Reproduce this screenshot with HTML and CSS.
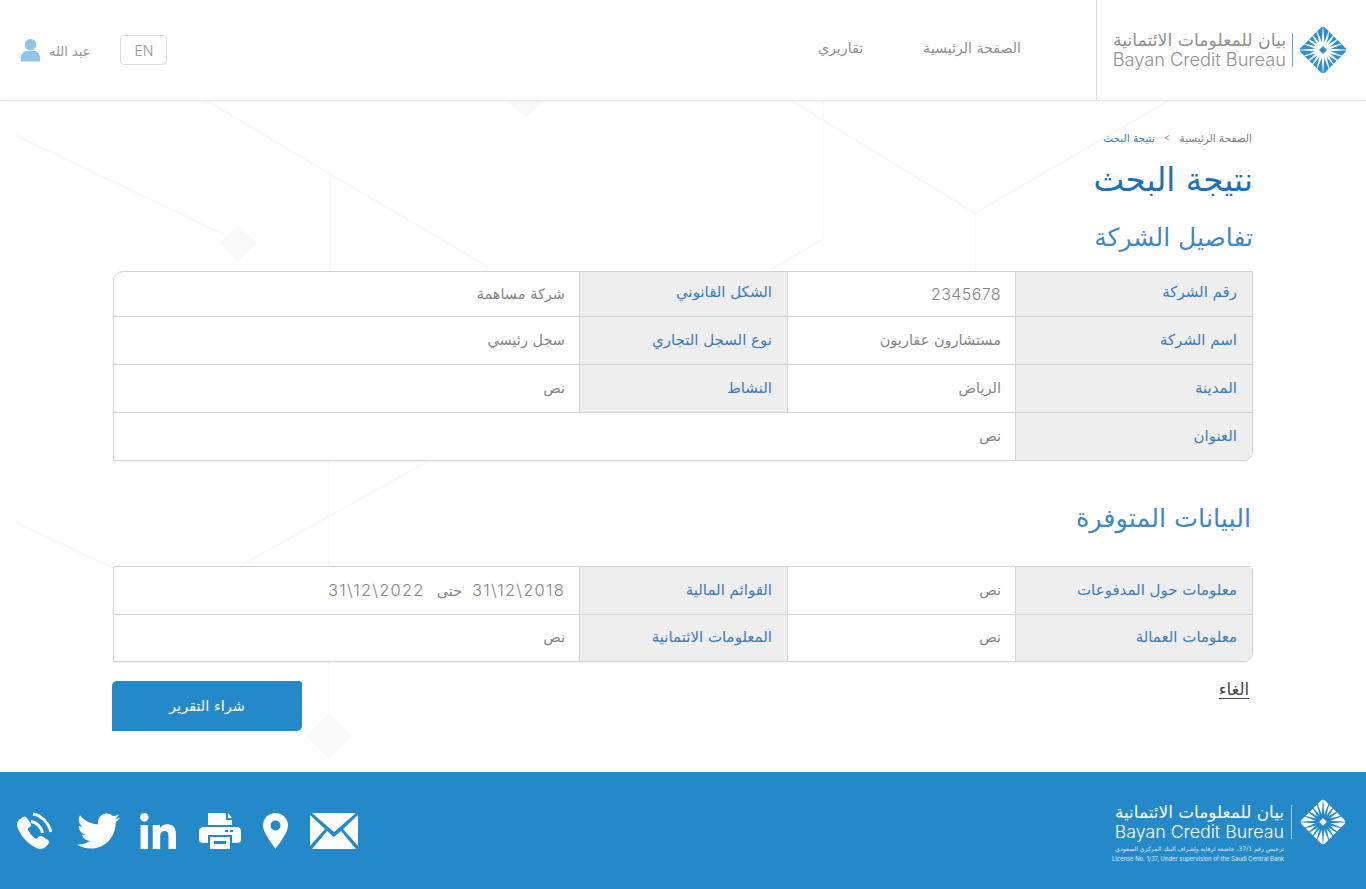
FILE: index.html
```html
<!DOCTYPE html>
<html lang="ar" dir="rtl">
<head>
  <meta charset="UTF-8" />
  <meta name="viewport" content="width=device-width, initial-scale=1.0" />
  <title>نتيجة البحث</title>
  <link rel="stylesheet" href="styles.css">
</head>
<body>

  <!-- Header -->
  <header class="site-header">
    <a class="brand" href="#">
      <svg class="brand-mark" viewBox="0 0 48 48"><use href="#mark" /></svg>
      <span class="brand-rule"></span>
      <span class="brand-text">
        <span class="brand-ar">بيان للمعلومات الائتمانية</span>
        <span class="brand-en">Bayan Credit Bureau</span>
      </span>
    </a>
    <nav class="main-nav">
      <a href="#">الصفحة الرئيسية</a>
      <a href="#">تقاريري</a>
    </nav>
    <div class="user-area">
      <svg class="user-icon" viewBox="0 0 22 24"><circle cx="11" cy="6.5" r="6" /><path d="M1 24v-4c0-4 3-7 6-7h8c3 0 6 3 6 7v4z" /></svg>
      <span class="user-name">عبد الله</span>
      <a class="lang-btn" href="#">EN</a>
    </div>
  </header>

  <!-- Background pattern -->
  <svg class="bg-lines" viewBox="0 0 1366 672">
    <g class="bg-stroke">
      <path d="M15 35 L225 135" />
      <path d="M205 0 L330 74 L490 168" />
      <path d="M330 74 V171" />
      <path d="M790 0 L975 113 L1170 0" />
      <path d="M975 113 V171" />
      <path d="M823 0 V139 L770 170" />
      <path d="M15 422 L113 468" />
      <path d="M240 466 L430 360" />
      <path d="M329 361 V466" />
      <path d="M329 561 V620" />
    </g>
    <g class="bg-fill">
      <path d="M526 -16 L544 2 L526 17 L508 2 Z" />
      <path d="M238 125 L257 143 L238 162 L220 143 Z" />
      <path d="M329 613 L352 636 L329 659 L306 636 Z" />
    </g>
  </svg>

  <main class="container">
    <div class="crumbs">
      <a href="#">الصفحة الرئيسية</a>
      <span class="crumb-sep">&gt;</span>
      <span class="crumb-current">نتيجة البحث</span>
    </div>
    <h1>نتيجة البحث</h1>
    <h2>تفاصيل الشركة</h2>

    <table class="info-table company">
      <colgroup><col class="c1"><col class="c2"><col class="c3"><col class="c4"></colgroup>
      <tr class="r1">
        <th>رقم الشركة</th>
        <td class="num">2345678</td>
        <th>الشكل القانوني</th>
        <td>شركة مساهمة</td>
      </tr>
      <tr>
        <th>اسم الشركة</th>
        <td>مستشارون عقاريون</td>
        <th>نوع السجل التجاري</th>
        <td>سجل رئيسي</td>
      </tr>
      <tr>
        <th>المدينة</th>
        <td>الرياض</td>
        <th>النشاط</th>
        <td>نص</td>
      </tr>
      <tr class="r4">
        <th>العنوان</th>
        <td colspan="3">نص</td>
      </tr>
    </table>

    <h2 class="second">البيانات المتوفرة</h2>

    <table class="info-table available">
      <colgroup><col class="c1"><col class="c2"><col class="c3"><col class="c4"></colgroup>
      <tr>
        <th>معلومات حول المدفوعات</th>
        <td>نص</td>
        <th>القوائم المالية</th>
        <td class="dates"><span>31\12\2018</span><small>حتى</small><span>31\12\2022</span></td>
      </tr>
      <tr class="r2">
        <th>معلومات العمالة</th>
        <td>نص</td>
        <th>المعلومات الائتمانية</th>
        <td>نص</td>
      </tr>
    </table>

    <div class="actions">
      <a class="cancel" href="#">الغاء</a>
      <button class="buy-btn">شراء التقرير</button>
    </div>
  </main>

  <!-- Footer -->
  <footer class="site-footer">
    <div class="footer-brand">
      <svg class="footer-mark" viewBox="0 0 48 48"><use href="#mark" /></svg>
      <span class="footer-rule"></span>
      <div class="footer-text">
        <span class="brand-ar">بيان للمعلومات الائتمانية</span>
        <span class="brand-en">Bayan Credit Bureau</span>
        <span class="lic-ar">ترخيص رقم 37/1، خاضعة لرقابة وإشراف البنك المركزي السعودي</span>
        <span class="lic-en">License No. 1/37, Under supervision of the Saudi Central Bank</span>
      </div>
    </div>
    <div class="footer-icons">
      <!-- mail -->
      <svg class="ic-mail" viewBox="0 0 48 36"><path d="M2 0H46L24 19Z" /><path d="M0 2V33L15 16Z" /><path d="M48 2V33L33 16Z" /><path d="M17 18L24 24L31 18L46 36H2Z" /></svg>
      <!-- pin -->
      <svg class="ic-pin" viewBox="0 0 25 36"><path fill-rule="evenodd" d="M12.5 0C5.6 0 0 5.5 0 12.3 0 20 8 29 12.5 36 17 29 25 20 25 12.3 25 5.5 19.4 0 12.5 0zM12.5 7.5a5 5 0 1 1 0 10 5 5 0 0 1 0-10z" /></svg>
      <!-- printer -->
      <svg class="ic-print" viewBox="0 0 42 36"><path d="M9 0H27V7H33V12H9Z" /><path d="M29 0L33 5H29Z" /><path fill-rule="evenodd" d="M4 14H38C40.5 14 42 16 42 18V27C42 29 40.5 30 38 30H33V22H9V30H4C1.500 30 0 29 0 27V18C0 16 1.500 14 4 14ZM26 17V19H29V17ZM31 17V19H34V17Z" /><path fill-rule="evenodd" d="M11 24H31V36H11ZM15 28V31H27V28Z" /></svg>
      <!-- linkedin -->
      <svg class="ic-in" viewBox="0 0 448 448"><path d="M100.280 448H7.400V148.900h92.880zM53.790 108.100C24.090 108.100 0 83.500 0 53.800a53.790 53.790 0 0 1 107.580 0c0 29.700-24.100 54.300-53.790 54.300zM447.900 448h-92.680V302.400c0-34.700-.7-79.200-48.290-79.200-48.290 0-55.690 37.700-55.690 76.700V448h-92.780V148.900h89.080v40.800h1.300c12.400-23.500 42.690-48.300 87.880-48.300 94 0 111.280 61.900 111.280 142.300V448z" /></svg>
      <!-- twitter -->
      <svg class="ic-tw" viewBox="0 48 512 416"><path d="M459.370 151.716c.325 4.548.325 9.097.325 13.645 0 138.720-105.583 298.558-298.558 298.558-59.452 0-114.680-17.219-161.137-47.106 8.447.974 16.568 1.299 25.340 1.299 49.055 0 94.213-16.568 130.274-44.832-46.132-.975-84.792-31.188-98.112-72.772 6.498.974 12.995 1.624 19.818 1.624 9.421 0 18.843-1.300 27.614-3.573-48.081-9.747-84.143-51.980-84.143-102.985v-1.299c13.969 7.797 30.214 12.670 47.431 13.319-28.264-18.843-46.781-51.005-46.781-87.391 0-19.492 5.197-37.360 14.294-52.954 51.655 63.675 129.300 105.258 216.365 109.807-1.624-7.797-2.599-15.918-2.599-24.040 0-57.828 46.782-104.934 104.934-104.934 30.213 0 57.502 12.670 76.670 33.137 23.715-4.548 46.456-13.320 66.599-25.340-7.798 24.366-24.366 44.833-46.132 57.827 21.117-2.273 41.584-8.122 60.426-16.243-14.292 20.791-32.161 39.308-52.628 54.253z" /></svg>
      <!-- phone -->
      <svg class="ic-phone" viewBox="0 0 36 37"><path d="M7 5C8.500 4 10 4.500 11 6L14.500 11.500C15.300 13 15 14.300 13.500 15.300L11.500 16.800C12.800 20.500 16.500 25 20.500 26.800L22.500 24.800C23.500 23.800 25 23.600 26.300 24.400L32 28C33.500 29 33.600 30.600 32.500 31.800L30 34.500C27.500 37.300 24 37.500 20.500 36C11.500 32 4.500 23.500 1.500 15.500C.3 12 1 9.500 3 7.800Z" /><path class="arc" d="M15 9.500C20 10 25.500 15 26.500 21" /><path class="arc" d="M17 2C25 3 33 11 35 20" /></svg>
    </div>
  </footer>

  <!-- logo mark, used in header and footer -->
  <svg class="defs" width="0" height="0">
    <symbol id="mark" viewBox="0 0 48 48">
      <path class="mark-body" d="M21.500 2 Q24 -.5 26.500 2 L46 21.500 Q48.500 24 46 26.500 L26.500 46 Q24 48.500 21.500 46 L2 26.500 Q-.5 24 2 21.500 Z" />
      <g class="mark-rays">
        <path id="ray" d="M22.200 24 L25.800 24 L24 -2 Z" />
        <use href="#ray" transform="rotate(18 24 24)" />
        <use href="#ray" transform="rotate(36 24 24)" />
        <use href="#ray" transform="rotate(54 24 24)" />
        <use href="#ray" transform="rotate(72 24 24)" />
        <use href="#ray" transform="rotate(90 24 24)" />
        <use href="#ray" transform="rotate(108 24 24)" />
        <use href="#ray" transform="rotate(126 24 24)" />
        <use href="#ray" transform="rotate(144 24 24)" />
        <use href="#ray" transform="rotate(162 24 24)" />
        <use href="#ray" transform="rotate(180 24 24)" />
        <use href="#ray" transform="rotate(198 24 24)" />
        <use href="#ray" transform="rotate(216 24 24)" />
        <use href="#ray" transform="rotate(234 24 24)" />
        <use href="#ray" transform="rotate(252 24 24)" />
        <use href="#ray" transform="rotate(270 24 24)" />
        <use href="#ray" transform="rotate(288 24 24)" />
        <use href="#ray" transform="rotate(306 24 24)" />
        <use href="#ray" transform="rotate(324 24 24)" />
        <use href="#ray" transform="rotate(342 24 24)" />
      </g>
      <path class="mark-hole" d="M24 15 L33 24 L24 33 L15 24 Z" />
      <path class="mark-core" d="M24 20 L28 24 L24 28 L20 24 Z" />
    </symbol>
  </svg>

</body>
</html>
```

FILE: styles.css
```css
* { margin: 0; padding: 0; box-sizing: border-box; }
html, body {
  height: 100%;
  overflow: hidden;
}
body {
  font-family: "DejaVu Sans", "Noto Sans", sans-serif;
  background: #fff;
  color: #888;
  display: flex;
  flex-direction: column;
  position: relative;
}
a { text-decoration: none; color: inherit; }
.defs { position: absolute; }

/* header */
.site-header {
  height: 101px;
  flex: none;
  display: flex;
  align-items: center;
  background: #fff;
  border-bottom: 1px solid #e8e8e8;
  box-shadow: 0 1px 3px rgba(0,0,0,0.05);
  position: relative;
  z-index: 2;
}
.brand {
  width: 270px;
  height: 100%;
  flex: none;
  display: flex;
  align-items: center;
  padding-right: 19px;
  border-left: 1px solid #d9d9d9;
  color: #8f8f8f;
}
.brand-mark { width: 48px; height: 48px; --slit: #fff; color: #2f8fd0; }
.brand-rule { width: 1px; height: 34px; background: #5aa7d8; margin: 0 6px; }
.brand-text { display: flex; flex-direction: column; align-items: flex-start; line-height: 1; }
.brand-ar { font-size: 17.300px; white-space: nowrap; }
.brand-en { font-family: "Inter", sans-serif; font-weight: 300; font-size: 18.200px; direction: ltr; white-space: nowrap; }
.brand .brand-en { margin-top: 1px; }

.main-nav {
  display: flex;
  gap: 60px;
  padding-right: 75px;
  font-size: 14.200px;
  color: #8f8f8f;
  margin-top: -4px;
}
.user-area {
  margin-right: auto;
  display: flex;
  align-items: center;
  direction: ltr;
  padding: 0 0 0 20px;
  font-size: 13px;
  color: #969696;
  width: 200px;
}
.user-icon { width: 21px; height: 24px; fill: #8ec5e8; margin-right: 8px; flex: none; }
.user-name { direction: rtl; margin-top: 2px; }
.lang-btn {
  width: 47px;
  height: 30px;
  border: 1px solid #ddd;
  border-radius: 4px;
  display: flex;
  align-items: center;
  justify-content: center;
  font-family: "Inter", sans-serif;
  font-size: 14px;
  font-weight: 300;
  margin-left: 30px;
}

/* background pattern */
.bg-lines {
  position: absolute;
  top: 100px;
  left: 0;
  width: 1366px;
  height: 672px;
  z-index: 0;
}
.bg-stroke path { fill: none; stroke: #f9f9f9; stroke-width: 2; }
.bg-fill path { fill: #f9f9f9; }

/* content */
.container {
  flex: 1;
  width: 1170px;
  margin: 0 auto;
  padding: 29px 15px 0;
  position: relative;
  z-index: 1;
}
.crumbs {
  font-size: 10.500px;
  line-height: 16px;
  color: #7b7b7b;
  display: flex;
  gap: 9px;
  padding-right: 1px;
}
.crumb-sep { font-family: "Inter", sans-serif; font-weight: 300; }
.crumb-current { color: #2a7fbd; }
h1 {
  font-size: 32.600px;
  font-weight: 400;
  line-height: 44px;
  color: #1f6fb5;
  margin-top: 12px;
}
h2 {
  font-size: 25px;
  font-weight: 400;
  line-height: 36px;
  color: #3f88c3;
  margin-top: 18px;
}
h2.second {
  font-size: 25.500px;
  margin-top: 39px;
  margin-bottom: 30px;
  padding-right: 2px;
}

.info-table {
  width: 1140px;
  table-layout: fixed;
  border-collapse: separate;
  border-spacing: 0;
  border: 1px solid #d3d3d3;
  box-shadow: 0 1px 2px rgba(0,0,0,0.05);
  background: #fff;
  font-size: 14.500px;
}
.company {
  margin-top: 15px;
  border-radius: 10px 0 10px 0;
}
.available { border-radius: 0 4px 10px 0; }
.c1 { width: 237px; }
.c2 { width: 228px; }
.c3 { width: 208px; }
.info-table th, .info-table td {
  height: 48px;
  padding: 0 14px 2px;
  text-align: right;
  border-bottom: 1px solid #d3d3d3;
  border-left: 1px solid #d3d3d3;
  font-weight: 400;
}
.info-table tr:last-child th, .info-table tr:last-child td { border-bottom: none; }
.info-table tr > :last-child { border-left: none; }
.info-table th { background: #eee; color: #3a7cb8; font-size: 15px; padding-right: 15px; }
.info-table td { color: #858585; }
.company .r1 th, .company .r1 td { height: 45px; padding-bottom: 0; }
.company .r1 th { padding-bottom: 5px; }
.company .r4 th, .company .r4 td { height: 47px; }
.available .r2 th, .available .r2 td { height: 46px; }
.info-table .num { font-family: "Inter", sans-serif; font-size: 16px; letter-spacing: 0.4px; font-weight: 300; }
.dates span {
  display: inline-block;
  direction: ltr;
  font-family: "Inter", sans-serif;
  font-size: 16.500px;
  font-weight: 300;
  letter-spacing: 1.200px;
}
.dates small { font-size: 14.500px; margin: 0 10px 0 12px; }
.info-table tr:first-child th:first-child { border-top-right-radius: inherit; }
.info-table tr:last-child th:first-child { border-bottom-right-radius: 9px; }

.actions {
  display: flex;
  justify-content: space-between;
  align-items: flex-start;
  margin-top: 19px;
}
.cancel {
  color: #444;
  font-size: 16.500px;
  line-height: 17px;
  margin-right: 4px;
  border-bottom: 1px solid #444;
}
.buy-btn {
  width: 190px;
  height: 50px;
  margin-left: -1px;
  background: #2389c9;
  color: #fff;
  border: none;
  border-radius: 5px 3px 5px 0;
  font-family: inherit;
  font-size: 14.500px;
}

/* footer */
.site-footer {
  height: 117px;
  flex: none;
  background: #2389c9;
  color: #fff;
  display: flex;
  align-items: center;
  justify-content: space-between;
  padding: 0 20px 0 16px;
  position: relative;
  z-index: 1;
}
.footer-brand { display: flex; align-items: flex-start; margin-top: 5px; }
.footer-mark { width: 46px; height: 46px; margin-top: -4px; --slit: #2389c9; color: #fff; flex: none; }
.footer-rule { width: 1px; height: 34px; background: #a8d2ec; margin: 2px 8px 0 7px; }
.footer-text { display: flex; flex-direction: column; align-items: flex-start; line-height: 1; }
.footer-text .brand-ar { font-size: 16.900px; margin-top: 1px; }
.footer-text .brand-en { font-size: 17.800px; margin-top: 2px; }
.lic-ar { font-size: 6.100px; line-height: 9px; margin-top: 4px; opacity: 0.85; white-space: nowrap; }
.lic-en { font-family: "Inter", sans-serif; font-size: 5.900px; line-height: 8px; margin-top: 2px; direction: ltr; opacity: 0.85; white-space: nowrap; }

.footer-icons {
  display: flex;
  align-items: center;
  gap: 22px;
}
.footer-icons svg { fill: #fff; display: block; flex: none; }
.ic-mail { width: 48px; height: 36px; }
.ic-pin { width: 25px; height: 36px; }
.ic-print { width: 42px; height: 36px; }
.ic-in { width: 38px; height: 36px; }
.ic-tw { width: 43px; height: 36px; margin: 0 -3px 0 3px; }
.ic-phone { width: 36px; height: 37px; }
.ic-phone .arc { fill: none; stroke: #fff; stroke-width: 3; }

/* logo mark parts */
.mark-body { fill: currentColor; }
.mark-rays { fill: var(--slit); }
.mark-hole { fill: var(--slit); }
.mark-core { fill: currentColor; }
```
